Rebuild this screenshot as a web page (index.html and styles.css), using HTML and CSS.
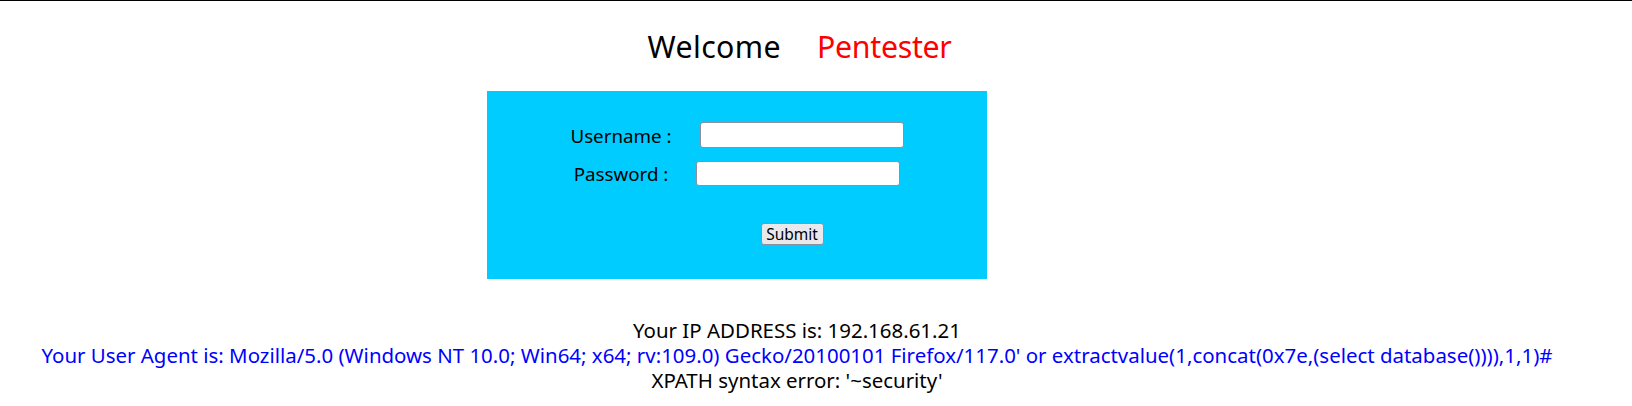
FILE: index.html
```html
<!DOCTYPE html>
<html>
<head>
<meta charset="utf-8">
<title>Less-18 Header Injection</title>
<link rel="stylesheet" href="styles.css">
</head>
<body>
<div class="topline"></div>
<div class="page">
  <div class="welcome"><span class="hello">Welcome</span><span class="name">Pentester</span></div>
  <div class="panel">
    <form class="login" action="" method="post">
      <div class="row row-user"><label class="lbl">Username :</label><input class="field" type="text" name="uname"></div>
      <div class="row row-pass"><label class="lbl">Password :</label><input class="field" type="text" name="passwd"></div>
      <div class="submit-row"><input class="btn" type="submit" name="submit" value="Submit"></div>
    </form>
  </div>
  <div class="info">
    <div class="line ip">Your IP ADDRESS is: 192.168.61.21</div>
    <div class="line ua">Your User Agent is: Mozilla/5.0 (Windows NT 10.0; Win64; x64; rv:109.0) Gecko/20100101 Firefox/117.0' or extractvalue(1,concat(0x7e,(select database()))),1,1)#</div>
    <div class="line err">XPATH syntax error: '~security'</div>
  </div>
</div>
</body>
</html>
```

FILE: styles.css
```css
html, body {
  margin: 0;
  padding: 0;
  background: #ffffff;
}
body {
  font-family: "Noto Sans", "Open Sans", sans-serif;
  color: #000000;
}
.topline {
  height: 1px;
  background: #000000;
}
.page {
  width: 1594px;
}
.welcome {
  display: flex;
  justify-content: center;
  gap: 36px;
  font-size: 30.3px;
  line-height: 40px;
  padding: 26px 0 0 5px;
}
.hello {
  letter-spacing: 0.4px;
}
.name {
  color: #ff0000;
  letter-spacing: -0.3px;
}
.panel {
  margin: 24px 0 0 487px;
  width: 500px;
  height: 188px;
  background: #00ccff;
  font-size: 18.75px;
}
.login {
  display: flex;
  flex-direction: column;
  align-items: center;
  padding-top: 31px;
}
.row {
  display: flex;
  align-items: center;
}
.row-user {
  height: 26px;
  gap: 28px;
}
.row-pass {
  margin-top: 13px;
  height: 25px;
  gap: 28px;
}
.field {
  box-sizing: border-box;
  width: 204px;
  height: 26px;
  border: 1px solid #8f8f9d;
  border-radius: 3px;
  background: #ffffff;
  padding: 0;
  margin: 0;
}
.row-pass .field {
  height: 25px;
}
.submit-row {
  margin: 34px 0 0 110px;
}
.btn {
  box-sizing: border-box;
  width: 63px;
  height: 22px;
  border: 1px solid #8f8f9d;
  border-radius: 3px;
  background: #e9e9ed;
  font-family: "Noto Sans", "Open Sans", sans-serif;
  font-size: 15.5px;
  line-height: 20px;
  padding: 0;
  margin: 0;
  color: #000;
}
.info {
  margin-top: 39px;
  text-align: center;
  font-size: 20.45px;
  line-height: 25px;
}
.ua {
  color: #0000ff;
}
```
